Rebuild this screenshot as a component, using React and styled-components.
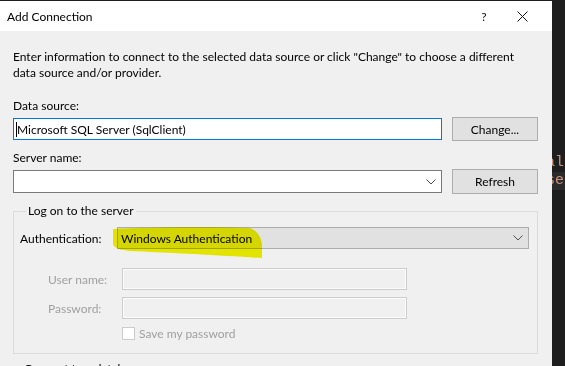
import React from "react";
import styled, { createGlobalStyle } from "styled-components";

const GlobalStyle = createGlobalStyle`
  html, body {
    margin: 0;
    padding: 0;
    background: #1e1e1e;
  }
  body {
    font-family: Lato, "Noto Sans", sans-serif;
    font-size: 12px;
    color: #000;
  }
`;

const Page = styled.div`
  display: flex;
  width: 565px;
  height: 366px;
  overflow: hidden;
  padding-top: 1px;
  box-sizing: border-box;
`;

const Dialog = styled.div`
  width: 552px;
  flex: none;
  background: #f0f0f0;
  display: flex;
  flex-direction: column;
`;

const TitleBar = styled.div`
  height: 30px;
  background: #fff;
  display: flex;
  align-items: center;
  padding: 0 12px 0 7px;
  flex: none;
`;

const Title = styled.div`
  flex: 1;
`;

const TitleButton = styled.div`
  width: ${(p) => p.$w}px;
  height: 30px;
  display: flex;
  align-items: center;
  justify-content: center;
  color: #111;
`;

const Body = styled.div`
  padding: 18px 14px 0 13px;
  display: flex;
  flex-direction: column;
`;

const Description = styled.p`
  margin: 0 0 17px;
  line-height: 16px;
  width: 520px;
`;

const Label = styled.div`
  line-height: 16px;
  margin-bottom: ${(p) => p.$mb}px;
`;

const Row = styled.div`
  display: flex;
  align-items: center;
  gap: 10px;
  margin-bottom: ${(p) => p.$mb || 0}px;
`;

const TextBox = styled.div`
  width: 429px;
  height: ${(p) => (p.$focus ? 22 : 23)}px;
  box-sizing: border-box;
  background: #fff;
  border: 1px solid ${(p) => (p.$focus ? "#0078d7" : "#7a7a7a")};
  display: flex;
  align-items: center;
  padding: 0 5px 0 2px;
`;

const Caret = styled.span`
  width: 1px;
  height: 15px;
  background: #000;
`;

const Grow = styled.span`
  flex: 1;
`;

const Button = styled.div`
  width: 86px;
  height: ${(p) => p.$h || 24}px;
  box-sizing: border-box;
  background: #e1e1e1;
  border: 1px solid #adadad;
  display: flex;
  align-items: center;
  justify-content: center;
`;

const Group = styled.fieldset`
  margin: 9px 0 0;
  padding: 8px 8px 10px 6px;
  border: 1px solid #dcdcdc;
  width: 525px;
  box-sizing: border-box;
  height: 151px;
`;

const Legend = styled.legend`
  padding: 0 2px;
  margin-left: 6px;
  line-height: 16px;
`;

const AuthRow = styled.div`
  display: flex;
  align-items: center;
  position: relative;
  margin-bottom: 19px;
`;

const AuthLabel = styled.div`
  width: 97px;
`;

const Select = styled.div`
  flex: 1;
  height: 22px;
  box-sizing: border-box;
  background: #e1e1e1;
  border: 1px solid #adadad;
  display: flex;
  align-items: center;
  padding: 0 5px 0 3px;
`;

const Marker = styled.svg`
  position: absolute;
  left: 90px;
  top: -3px;
  width: 160px;
  height: 40px;
  mix-blend-mode: multiply;
  pointer-events: none;
`;

const FieldRow = styled.div`
  display: flex;
  align-items: center;
  padding-left: 28px;
  margin-bottom: 7px;
`;

const FieldLabel = styled.div`
  width: 74px;
  color: #a0a0a0;
`;

const DisabledBox = styled.div`
  width: 285px;
  height: 22px;
  box-sizing: border-box;
  border: 1px solid #cccccc;
  box-shadow: inset 0 0 0 1px #fbfbfb;
  background: #f0f0f0;
`;

const CheckRow = styled.label`
  display: flex;
  align-items: center;
  gap: 4px;
  padding-left: 102px;
  margin-top: 2px;
  color: #a0a0a0;
`;

const CheckBox = styled.span`
  width: 13px;
  height: 13px;
  box-sizing: border-box;
  border: 1px solid #cccccc;
  background: #fff;
`;

const Cut = styled.div`
  margin: 7px 0 0 11px;
  line-height: 16px;
`;

const Editor = styled.div`
  flex: 1;
  background: #1e1e1e;
  padding-top: 153px;
  font-family: "Liberation Mono", "DejaVu Sans Mono", monospace;
  font-size: 15px;
  color: #c8937a;
  overflow: hidden;
`;

const CodeLine = styled.div`
  height: 18px;
  line-height: 18px;
  white-space: nowrap;
  margin-left: -6px;
  padding-left: 0;
  background: ${(p) => (p.$current ? "#2a2a2a" : "transparent")};
`;

const Chevron = () => (
  <svg width="10" height="6" viewBox="0 0 10 6">
    <path d="M0.5 0.5 L5 5 L9.5 0.5" fill="none" stroke="#505050" strokeWidth="1" />
  </svg>
);

const CloseIcon = () => (
  <svg width="11" height="11" viewBox="0 0 11 11">
    <path d="M0.5 0.5 L10.5 10.5 M10.5 0.5 L0.5 10.5" stroke="#111" strokeWidth="1" />
  </svg>
);

export default function App() {
  return (
    <>
      <GlobalStyle />
      <Page>
        <Dialog>
          <TitleBar>
            <Title>Add Connection</Title>
            <TitleButton $w={40}>?</TitleButton>
            <TitleButton $w={36}>
              <CloseIcon />
            </TitleButton>
          </TitleBar>
          <Body>
            <Description>
              Enter information to connect to the selected data source or click
              "Change" to choose a different data source and/or provider.
            </Description>

            <Label $mb={3}>Data source:</Label>
            <Row $mb={9}>
              <TextBox $focus>
                <Caret />
                Microsoft SQL Server (SqlClient)
              </TextBox>
              <Button>Change...</Button>
            </Row>

            <Label $mb={3}>Server name:</Label>
            <Row>
              <TextBox>
                <Grow />
                <Chevron />
              </TextBox>
              <Button $h={25}>Refresh</Button>
            </Row>

            <Group>
              <Legend>Log on to the server</Legend>
              <AuthRow>
                <AuthLabel>Authentication:</AuthLabel>
                <Select>
                  <Grow>Windows Authentication</Grow>
                  <Chevron />
                </Select>
                <Marker viewBox="0 0 160 40">
                  <path
                    d="M3 5 C40 3 110 3 140 4 C148 7 151 14 152 20 L152 34 C120 32 70 29 20 27 C10 26 4 24 3 20 Z"
                    fill="#f2f200"
                  />
                </Marker>
              </AuthRow>
              <FieldRow>
                <FieldLabel>User name:</FieldLabel>
                <DisabledBox />
              </FieldRow>
              <FieldRow>
                <FieldLabel>Password:</FieldLabel>
                <DisabledBox />
              </FieldRow>
              <CheckRow>
                <CheckBox />
                Save my password
              </CheckRow>
            </Group>
            <Cut>Connect to a database</Cut>
          </Body>
        </Dialog>
        <Editor>
          <CodeLine>al</CodeLine>
          <CodeLine $current>se</CodeLine>
        </Editor>
      </Page>
    </>
  );
}
